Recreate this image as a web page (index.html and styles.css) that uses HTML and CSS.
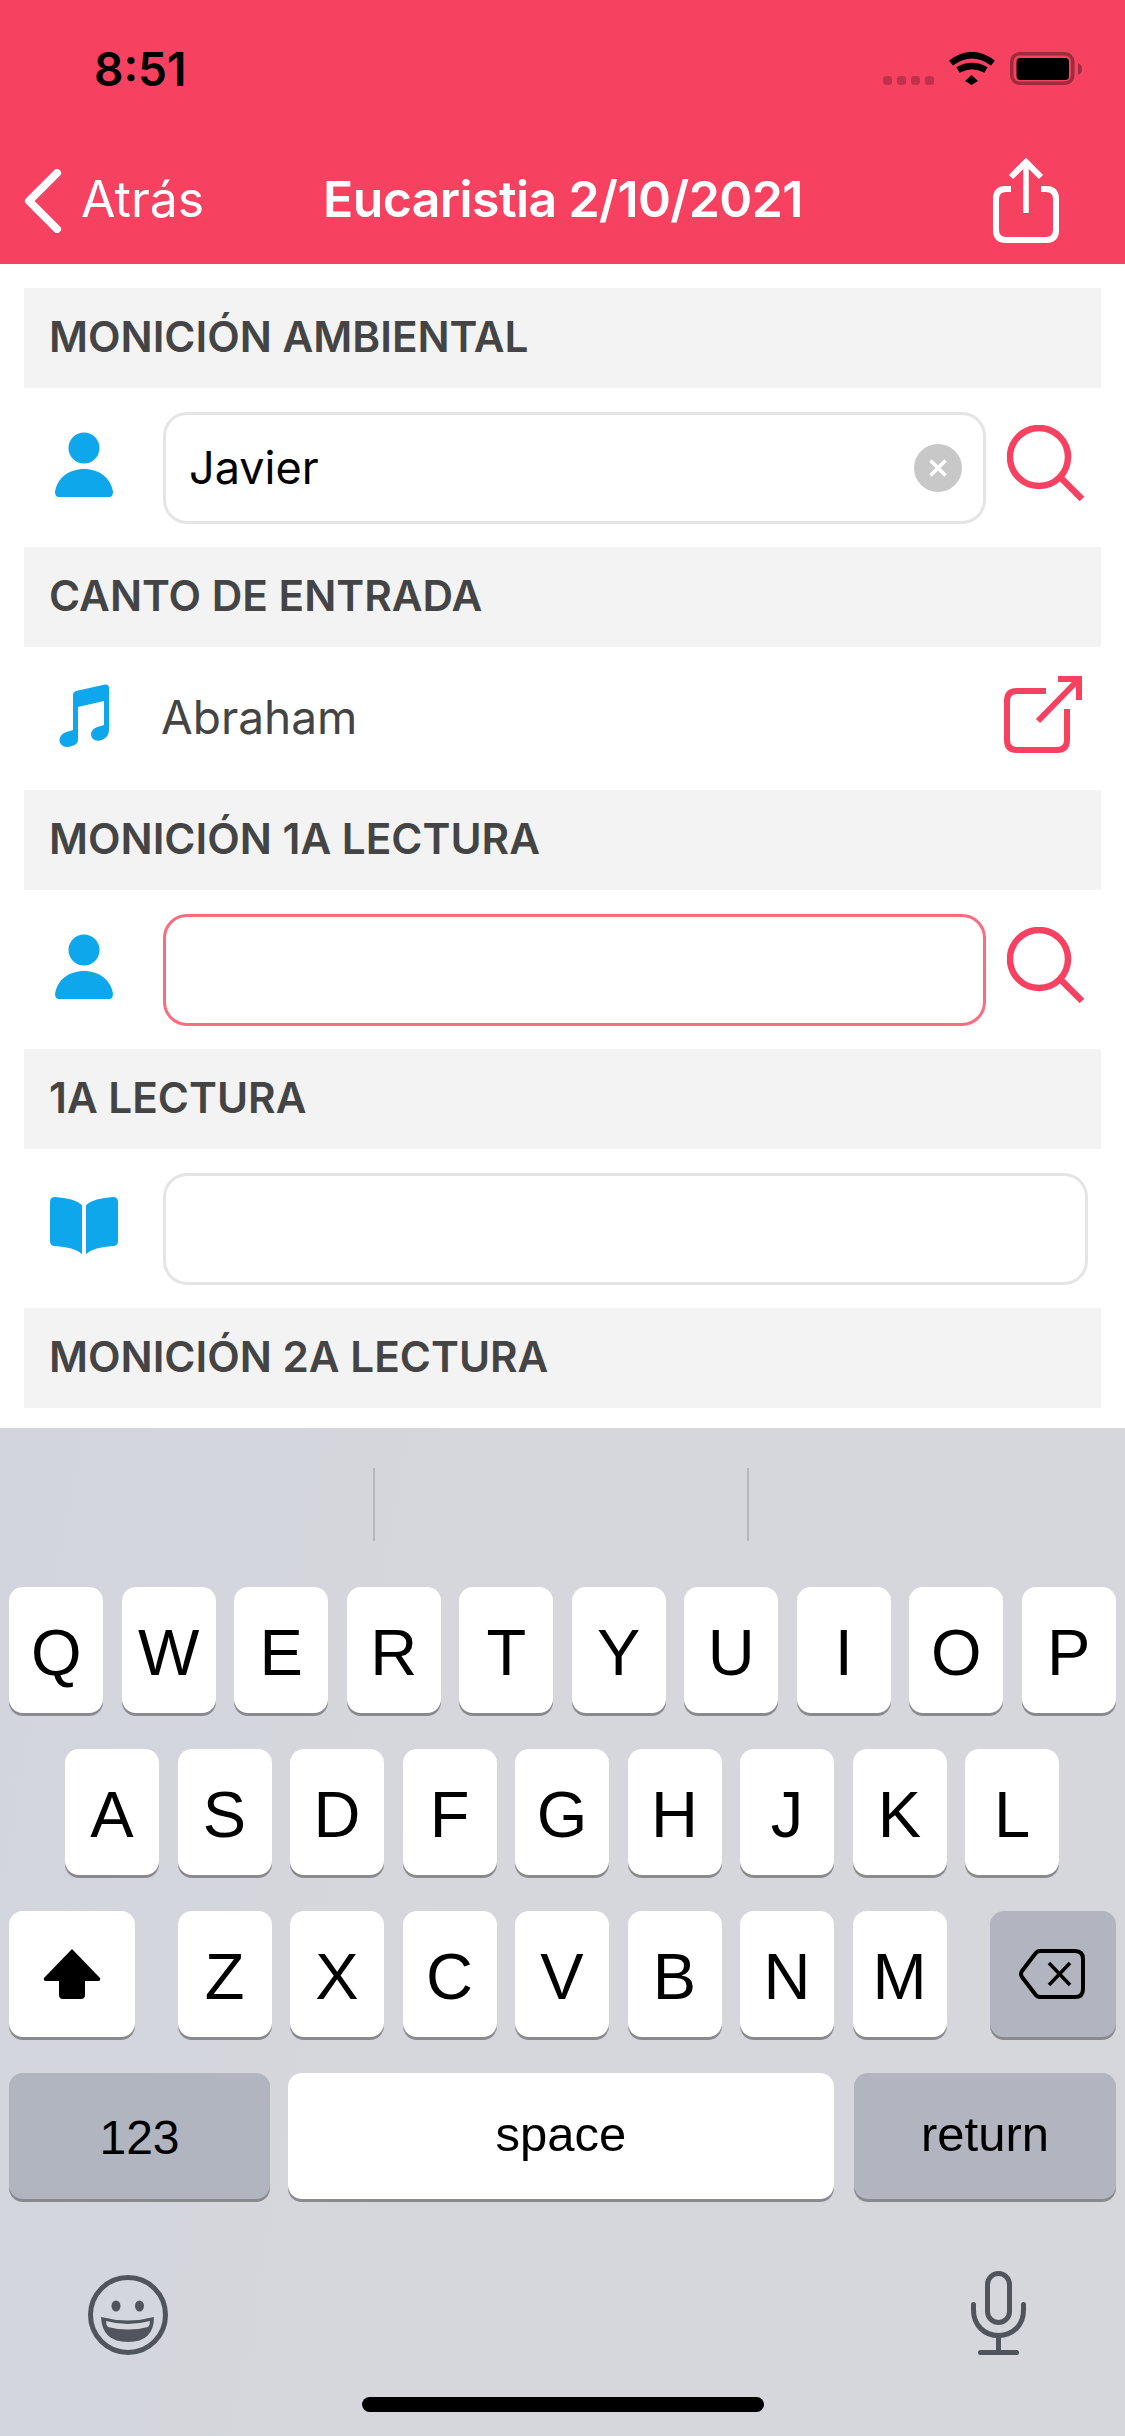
FILE: index.html
```html
<!DOCTYPE html>
<html lang="es">
    <head>
        <meta charset="utf-8">
        <meta name="viewport" content="width=device-width, initial-scale=1.0">
        <title>Eucaristia 2/10/2021</title>
        <link rel="stylesheet" href="styles.css">
    </head>
    <body>
        <div id="screen">
            <header id="top">
                <div id="status">
                    <span id="clock">8:51</span>
                    <div id="status-icons">
                        <div id="signal"><i></i><i></i><i></i><i></i></div>
                        <svg class="wifi" width="46" height="34" viewBox="0 0 46 34">
                            <path d="M22.500 23 L29 29 L22.500 33 L16 29 Z" fill="#000"/>
                            <path d="M9 18 Q23 10 37 18" fill="none" stroke="#000" stroke-width="6.500"/>
                            <path d="M2 11 Q23 -4.500 44 11" fill="none" stroke="#000" stroke-width="6.500"/>
                        </svg>
                        <svg class="battery" width="72" height="33" viewBox="0 0 72 33">
                            <rect x="1.750" y="1.750" width="61" height="29.500" rx="8" fill="none" stroke="#000" stroke-opacity="0.35" stroke-width="3.500"/>
                            <rect x="6.500" y="6" width="52.500" height="22" rx="4" fill="#000"/>
                            <path d="M68 11 Q72 13 72 17 Q72 21 68 23 Z" fill="#000" fill-opacity="0.35"/>
                        </svg>
                    </div>
                </div>
                <nav id="nav">
                    <a class="back">
                        <svg width="38" height="64" viewBox="0 0 38 64">
                            <path d="M33 4 L5 32 L33 60" fill="none" stroke="#fff" stroke-width="8" stroke-linecap="round" stroke-linejoin="round"/>
                        </svg>
                        <span>Atrás</span>
                    </a>
                    <h1>Eucaristia 2/10/2021</h1>
                    <svg class="share" width="66" height="86" viewBox="0 0 66 86">
                        <path d="M18 31 H13 Q3 31 3 41 V72 Q3 82 13 82 H53 Q63 82 63 72 V41 Q63 31 53 31 H48" fill="none" stroke="#fff" stroke-width="6"/>
                        <path d="M33 3 V55" fill="none" stroke="#fff" stroke-width="5.500"/>
                        <path d="M18 19 L33 4 L48 19" fill="none" stroke="#fff" stroke-width="6"/>
                    </svg>
                </nav>
            </header>

            <main id="form">
                <h2 class="section">MONICIÓN AMBIENTAL</h2>
                <div class="row">
                    <div class="row-icon">
                        <svg class="person" width="60" height="66" viewBox="0 0 60 66">
                            <circle cx="30" cy="16" r="15.500"/>
                            <path d="M1 60 C3 46 15 37 30 37 C45 37 57 46 59 60 Q59 65 55 65 H5 Q1 65 1 60 Z"/>
                        </svg>
                    </div>
                    <div class="field">
                        <input type="text" value="Javier">
                        <span class="clear">
                            <svg width="22" height="22" viewBox="0 0 22 22">
                                <path d="M3.500 3.500 L18.500 18.500 M18.500 3.500 L3.500 18.500" stroke="#fff" stroke-width="3.500"/>
                            </svg>
                        </span>
                    </div>
                    <svg class="search" width="78" height="78" viewBox="0 0 78 78">
                        <circle cx="32" cy="32" r="29" fill="none" stroke="#f74160" stroke-width="6.500"/>
                        <path d="M54 53 L75 74" fill="none" stroke="#f74160" stroke-width="6.500"/>
                    </svg>
                </div>

                <h2 class="section">CANTO DE ENTRADA</h2>
                <div class="row row-plain">
                    <div class="row-icon">
                        <svg class="music" width="50" height="64" viewBox="0 0 50 64">
                            <path d="M14 11 Q14 8 17 7 L46 0.500 Q50 0 50 4 V46 Q50 53 43 56 Q36 58 33 54 Q30 48 36 44 Q38 43 45 41 V17 L19 23 V56 Q19 60 13 62 Q5 65 1 59 Q-1 53 5 49 Q7 48 14 46 Z"/>
                        </svg>
                    </div>
                    <span class="song">Abraham</span>
                    <svg class="open" width="80" height="80" viewBox="0 0 80 80">
                        <path d="M44 15 H15 Q5 15 5 25 V64 Q5 74 15 74 H55 Q65 74 65 64 V33" fill="none" stroke="#f74160" stroke-width="6"/>
                        <path d="M56 3 H77 V24" fill="none" stroke="#f74160" stroke-width="6"/>
                        <path d="M77 3 L36 45" fill="none" stroke="#f74160" stroke-width="6"/>
                    </svg>
                </div>

                <h2 class="section">MONICIÓN 1A LECTURA</h2>
                <div class="row">
                    <div class="row-icon">
                        <svg class="person" width="60" height="66" viewBox="0 0 60 66">
                            <circle cx="30" cy="16" r="15.500"/>
                            <path d="M1 60 C3 46 15 37 30 37 C45 37 57 46 59 60 Q59 65 55 65 H5 Q1 65 1 60 Z"/>
                        </svg>
                    </div>
                    <div class="field field-error">
                        <input type="text">
                    </div>
                    <svg class="search" width="78" height="78" viewBox="0 0 78 78">
                        <circle cx="32" cy="32" r="29" fill="none" stroke="#f74160" stroke-width="6.500"/>
                        <path d="M54 53 L75 74" fill="none" stroke="#f74160" stroke-width="6.500"/>
                    </svg>
                </div>

                <h2 class="section">1A LECTURA</h2>
                <div class="row">
                    <div class="row-icon">
                        <svg class="book" width="68" height="58" viewBox="0 0 68 58">
                            <path d="M32 8 V57 Q24 50 5 49 Q0 49 0 44 V5 Q0 0 5 0 Q24 1 32 8 Z"/>
                            <path d="M36 8 V57 Q44 50 63 49 Q68 49 68 44 V5 Q68 0 63 0 Q44 1 36 8 Z"/>
                        </svg>
                    </div>
                    <div class="field field-wide">
                        <input type="text">
                    </div>
                </div>

                <h2 class="section">MONICIÓN 2A LECTURA</h2>
            </main>

            <section id="keyboard">
                <div id="suggestions"><i></i><i></i></div>
                <div class="keys">
                    <div class="key-row">
                        <span class="key">Q</span><span class="key">W</span><span class="key">E</span><span class="key">R</span><span class="key">T</span><span class="key">Y</span><span class="key">U</span><span class="key">I</span><span class="key">O</span><span class="key">P</span>
                    </div>
                    <div class="key-row key-row-home">
                        <span class="key">A</span><span class="key">S</span><span class="key">D</span><span class="key">F</span><span class="key">G</span><span class="key">H</span><span class="key">J</span><span class="key">K</span><span class="key">L</span>
                    </div>
                    <div class="key-row key-row-split">
                        <span class="key key-side key-light">
                            <svg width="58" height="50" viewBox="0 0 58 50">
                                <path d="M29 0 L57 29 Q58 32 55 32 H42 V46 Q42 50 38 50 H20 Q16 50 16 46 V32 H3 Q0 32 1 29 Z"/>
                            </svg>
                        </span>
                        <div class="key-group">
                            <span class="key">Z</span><span class="key">X</span><span class="key">C</span><span class="key">V</span><span class="key">B</span><span class="key">N</span><span class="key">M</span>
                        </div>
                        <span class="key key-side">
                            <svg class="del-icon" width="68" height="52" viewBox="0 0 68 52">
                                <path d="M22 3 H57 Q65 3 65 11 V41 Q65 49 57 49 H22 Q19 49 17 46 L4 29 Q2 26 4 23 L17 6 Q19 3 22 3 Z" fill="none" stroke="#000" stroke-width="4"/>
                                <path d="M31 15 L52 37 M52 15 L31 37" stroke="#000" stroke-width="3.500"/>
                            </svg>
                        </span>
                    </div>
                    <div class="key-row key-row-bottom">
                        <span class="key key-action key-num">123</span>
                        <span class="key key-space">space</span>
                        <span class="key key-action key-return">return</span>
                    </div>
                </div>
                <div id="kb-tools">
                    <svg width="80" height="80" viewBox="0 0 80 80">
                        <circle cx="40" cy="40" r="37.500" fill="none" stroke="#50555c" stroke-width="5"/>
                        <ellipse cx="28" cy="31" rx="4.500" ry="5.500" fill="#50555c"/>
                        <ellipse cx="51.500" cy="31" rx="4.500" ry="5.500" fill="#50555c"/>
                        <path d="M13 42 Q40 49 66 42 Q66 67 40 67 Q14 67 13 42 Z" fill="#50555c"/>
                        <path d="M18 46 Q40 52 62 46 Q62 50 60 52 Q40 57 20 52 Q18 50 18 46 Z" fill="#d5d7dc"/>
                    </svg>
                    <svg width="56" height="84" viewBox="0 0 56 84">
                        <rect x="17.500" y="2.500" width="22" height="49" rx="11" fill="none" stroke="#50555c" stroke-width="5"/>
                        <path d="M3.500 33.500 V39 C3.500 54 14 64.500 28.500 64.500 C43 64.500 53.500 54 53.500 39 V33.500" fill="none" stroke="#50555c" stroke-width="5" stroke-linecap="round"/>
                        <path d="M28.500 64 V80" stroke="#50555c" stroke-width="5"/>
                        <path d="M10.500 81.500 H46.500" stroke="#50555c" stroke-width="5" stroke-linecap="round"/>
                    </svg>
                </div>
                <div id="home-bar"></div>
            </section>
        </div>
    </body>
</html>
```
FILE: styles.css
```css
* {
    box-sizing: border-box;
}

html, body {
    margin: 0;
    padding: 0;
}

body {
    font-family: Inter, "Liberation Sans", sans-serif;
    color: #000;
}

#screen {
    width: 1125px;
    height: 2436px;
    display: flex;
    flex-direction: column;
    overflow: hidden;
    background: #fff;
}

/* status + nav */
#top {
    height: 264px;
    flex: none;
    background: #f74160;
}

#status {
    height: 136px;
    display: flex;
    justify-content: space-between;
    padding: 42px 43px 0 94px;
}

#clock {
    font-size: 46px;
    line-height: 54px;
    font-weight: 600;
}

#status-icons {
    display: flex;
    gap: 15px;
    align-items: flex-start;
    padding-top: 10px;
}

#signal {
    display: flex;
    gap: 5px;
    padding-top: 24px;
}

#signal i {
    width: 9px;
    height: 9px;
    border-radius: 3px;
    background: rgba(0, 0, 0, 0.22);
}

#nav {
    height: 128px;
    position: relative;
    display: flex;
    justify-content: space-between;
    align-items: flex-start;
    padding: 28px 66px 0 24px;
    color: #fff;
}

.back {
    display: flex;
    align-items: center;
    gap: 19px;
    font-size: 50px;
    height: 70px;
}

.back svg {
    margin-top: 4px;
}

.share {
    margin-top: -6px;
}

#nav h1 {
    margin: 0;
    position: absolute;
    left: 323px;
    top: 33px;
    font-size: 50px;
    line-height: 60px;
    font-weight: 600;
    letter-spacing: -0.6px;
}

/* form */
#form {
    flex: 1;
    min-height: 0;
    padding: 24px 24px 0;
}

.section {
    margin: 0;
    height: 100px;
    padding: 0 25px;
    background: #f3f3f3;
    color: #444;
    font-size: 42.3px;
    line-height: 98px;
    font-weight: 600;
}

.row {
    height: 159px;
    display: flex;
    align-items: center;
}

.row-plain {
    height: 143px;
}

.row-icon {
    width: 120px;
    flex: none;
    display: flex;
    justify-content: center;
    margin-right: 19px;
}

.person, .music, .book {
    fill: #0fa7ec;
    margin-bottom: 5px;
}

.field {
    width: 823px;
    height: 112px;
    display: flex;
    align-items: center;
    padding: 0 21px 0 23px;
    border: 3px solid #e5e5e5;
    border-radius: 24px;
}

.field input {
    flex: 1;
    min-width: 0;
    border: 0;
    padding: 0;
    outline: none;
    background: none;
    font-family: inherit;
    font-size: 45px;
    color: #000;
}

.field-error {
    border-color: #f96d80;
}

.field-wide {
    width: 925px;
}

.clear {
    width: 48px;
    height: 48px;
    border-radius: 50%;
    background: #c8c8c8;
    display: flex;
    align-items: center;
    justify-content: center;
}

.search {
    flex: none;
    margin: 0 0 7px 21px;
}

.song {
    flex: 1;
    margin-left: -2px;
    margin-bottom: 3px;
    font-size: 46px;
    color: #444;
}

.open {
    flex: none;
    margin: 0 19px 5px 0;
}

/* keyboard */
#keyboard {
    height: 1008px;
    flex: none;
    position: relative;
    background: linear-gradient(100deg, #d2d5dd, #d5d7dc 40%);
}

#suggestions {
    height: 159px;
    display: flex;
    justify-content: center;
    gap: 372px;
    padding: 40px 3px 0 0;
}

#suggestions i {
    width: 2px;
    height: 73px;
    background: #b4b7bc;
}

.keys {
    display: flex;
    flex-direction: column;
    gap: 36px;
}

.key-row {
    display: flex;
    justify-content: center;
    gap: 18.5px;
}

.key-row-home {
    padding-right: 1px;
}

.key-group {
    display: flex;
    gap: 18.5px;
    margin-right: 1px;
}

.key-row-split {
    justify-content: space-between;
    padding: 0 9px;
}

.key-row-bottom {
    padding: 0 9px;
    justify-content: flex-start;
}

.key {
    width: 94px;
    height: 126px;
    flex: none;
    display: flex;
    align-items: center;
    justify-content: center;
    padding-top: 5px;
    border-radius: 14px;
    background: #fff;
    box-shadow: 0 3px 0 #898a8e;
    font-family: "Liberation Sans", Arial, sans-serif;
    font-size: 65px;
}

.key-side {
    width: 126px;
    padding-top: 0;
    background: #b2b5c0;
}

.key-light {
    background: #fff;
}

.del-icon {
    margin-right: 2px;
}

.key-action, .key-space {
    padding-top: 0;
    padding-bottom: 4px;
    font-size: 49px;
}

.key-num {
    width: 261px;
    padding-top: 2px;
    padding-bottom: 0;
    font-size: 48px;
    background: #b0b5c0;
}

.key-space {
    width: 546px;
    margin-left: -0.500px;
}

.key-return {
    width: 262px;
    margin-left: 1.500px;
    background: #b2b5c0;
}

#kb-tools {
    display: flex;
    justify-content: space-between;
    align-items: flex-end;
    padding: 72px 99px 0 88px;
}

#home-bar {
    position: absolute;
    left: 362px;
    top: 969px;
    width: 402px;
    height: 15px;
    border-radius: 8px;
    background: #000;
}
```
